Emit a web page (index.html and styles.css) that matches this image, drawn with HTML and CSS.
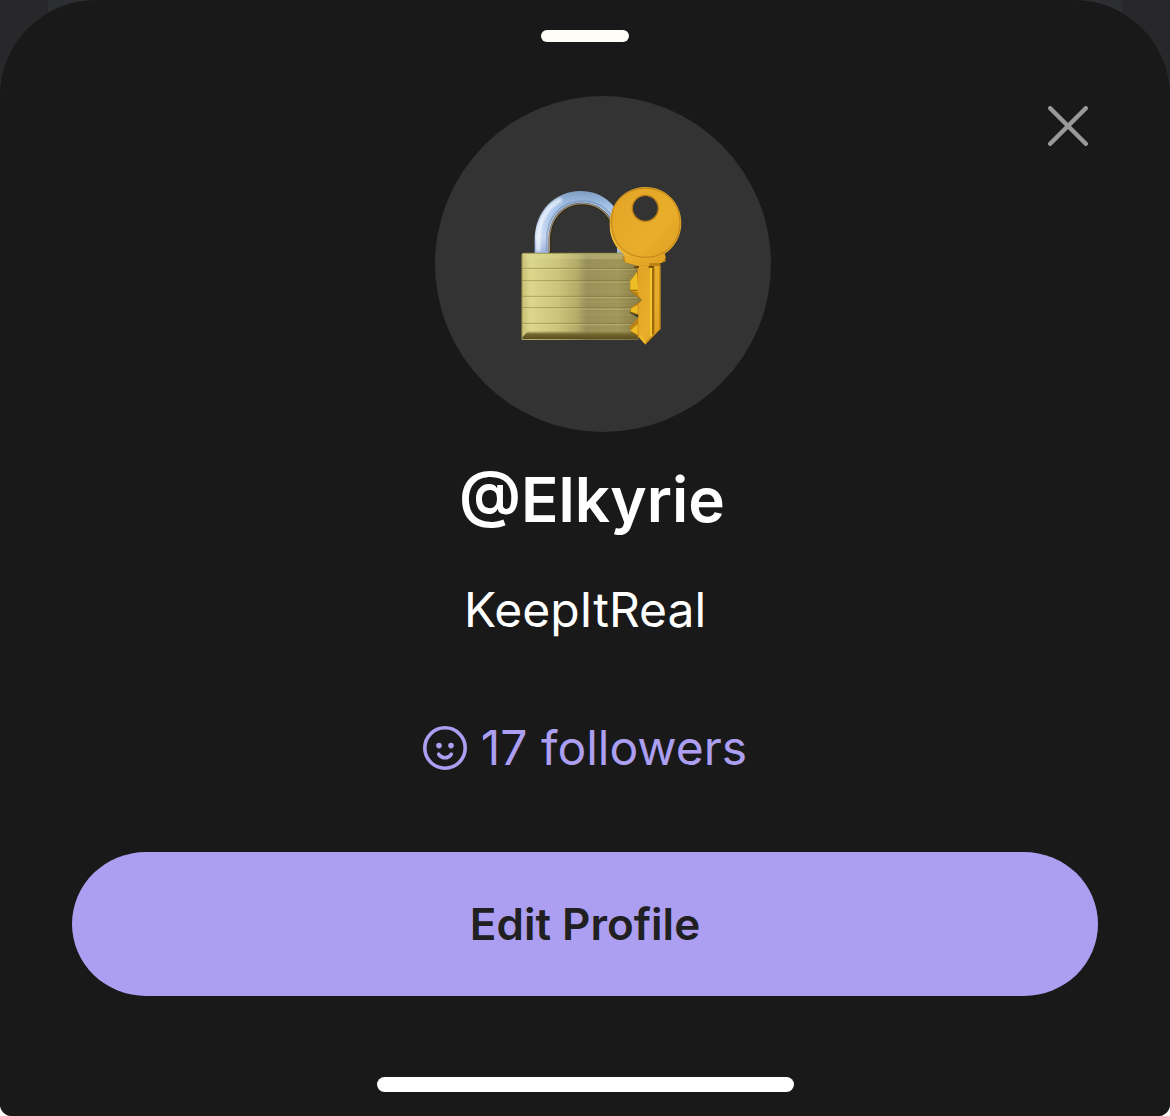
FILE: index.html
```html
<!DOCTYPE html>
<html lang="en">
<head>
    <meta charset="UTF-8">
    <meta name="viewport" content="width=device-width, initial-scale=1.0">
    <title>@Elkyrie</title>
    <link rel="stylesheet" href="styles.css">
</head>
<body>
    <div class="backdrop">
        <main class="sheet">
            <div class="handle"></div>
            <button class="close" type="button" aria-label="Close">
                <svg viewBox="0 0 40 40" aria-hidden="true">
                    <path d="M2.2 2.2 37.8 37.8M37.8 2.2 2.2 37.8"/>
                </svg>
            </button>

            <div class="avatar-row">
                <div class="avatar">
                    <svg class="emoji" viewBox="9 -18 600 600" role="img" aria-label="Locked with key">
                        <defs>
                            <linearGradient id="steel" x1="0" y1="0" x2="0" y2="1">
                                <stop offset="0" stop-color="#7f9cc0"/>
                                <stop offset=".25" stop-color="#a3c3ea"/>
                                <stop offset=".75" stop-color="#c9d8f2"/>
                                <stop offset="1" stop-color="#9cb2dc"/>
                            </linearGradient>
                            <linearGradient id="brass" x1="0" x2="1">
                                <stop offset="0" stop-color="#c5bf72"/>
                                <stop offset=".07" stop-color="#dcd78c"/>
                                <stop offset=".3" stop-color="#cbc47b"/>
                                <stop offset=".46" stop-color="#b3ab69"/>
                                <stop offset=".54" stop-color="#99905a"/>
                                <stop offset=".8" stop-color="#a0965a"/>
                                <stop offset="1" stop-color="#877a43"/>
                            </linearGradient>
                            <linearGradient id="base" x1="0" y1="0" x2="0" y2="1">
                                <stop offset="0" stop-color="#8d8244" stop-opacity="0"/>
                                <stop offset=".4" stop-color="#75682f"/>
                                <stop offset="1" stop-color="#5c4d1d"/>
                            </linearGradient>
                            <linearGradient id="gold" x1="0" y1="0" x2="1" y2="1">
                                <stop offset="0" stop-color="#e3a326"/>
                                <stop offset=".6" stop-color="#e8ae2b"/>
                                <stop offset="1" stop-color="#dc9a1e"/>
                            </linearGradient>
                            <filter id="soft" x="-10%" y="-10%" width="120%" height="120%">
                                <feGaussianBlur stdDeviation="4"/>
                            </filter>
                        </defs>

                        <!-- shackle -->
                        <path d="M104 249V210C104 125 165 63 241 63c70 0 119 48 130 112v74h-20v-45c-2-57-46-106-104-106-60 0-101 45-101 113v38Z" fill="url(#steel)"/>
                        <path d="M115 244v-34C115 150 145 105 185 88" fill="none" stroke="#fff" stroke-width="12" opacity=".8" filter="url(#soft)"/>
                        <path d="M140 244v-34c0-68 42-117 108-117 45 0 77 23 94 60" fill="none" stroke="#6d7f9b" stroke-width="5" opacity=".5"/>
                        <path d="M148 247v-36c0-65 40-110 99-110 38 0 66 20 84 49" fill="none" stroke="#a38e70" stroke-width="4"/>
                        <path d="M153 247v-36c0-62 38-105 94-105 35 0 62 17 80 45" fill="none" stroke="#34301f" stroke-width="4"/>

                        <!-- body -->
                        <path d="M65 256q0-7 8-7H385l29 40v15l-23 28v30l34 28-34 28v12l27 15-27 31 25 27v6H65Z" fill="url(#brass)"/>
                        <path d="M68 252H378l8 15H80Z" fill="#e1dda0" opacity=".28"/>
                        <path d="M71 250H378" stroke="#a49954" stroke-width="3"/>
                        <g fill="none" stroke-width="3">
                            <path d="M67 295h341M67 332h324M67 379h340M67 413h332M67 460h330" stroke="#716630" opacity=".45"/>
                            <path d="M67 299h339M67 336h324M67 383h345M67 417h325M67 464h326" stroke="#e7e197" opacity=".35"/>
                            <path d="M67 310h333M67 350h324M67 366h330M67 395h350M67 434h340" stroke="#e3dc8b" stroke-width="2" opacity=".2"/>
                        </g>
                        <path d="M65 254v250" stroke="#716a38" stroke-width="4" opacity=".7"/>
                        <path d="M66 503 84 482h318l14 25H69Z" fill="url(#base)"/>

                        <!-- key -->
                        <path d="m414 288-2 16-22 28v30l35 29-33 22v12l27 12-29 34v7l28 27 18 19 45-46V278l16-3-2-23-129 8 10 18 38 9Z" fill="#bd8212"/>
                        <path d="m411 306-20 27v29l24 4Zm2 98-21 13v9l21 6Zm0 58-22 20 22 12Z" fill="#edbd24"/>
                        <path d="M391 361h22M392 427l22 7M392 486l22 12" fill="none" stroke="#8a6210" stroke-width="3"/>
                        <path d="M414 288h67v189l-46 44-20-22V403l11-12-12-17Z" fill="url(#gold)"/>
                        <path fill-rule="evenodd" d="M436 51c61 0 108 48 108 108 0 40-20 74-50 92l3 13-11 15h-38v8h-35l-37-10-4-23c-27-21-43-53-43-91 0-63 45-112 107-112Zm0 26a38 38 0 1 0 0 76 38 38 0 0 0 0-76Z" fill="url(#gold)"/>
                        <path d="M337 122C352 80 390 55 436 55c60 0 104 45 104 103 0 56-42 104-103 104-58 0-102-42-102-103 0-13 0-25 4-37" fill="none" stroke="#b57b17" stroke-width="3" opacity=".8"/>
                        <path d="M331 174c4 42 27 70 52 83" fill="none" stroke="#f0c63a" stroke-width="3"/>
                        <circle cx="436" cy="115" r="39" fill="none" stroke="#b87b16" stroke-width="4"/>
                        <path d="M403 288h14v6h-14ZM446 288h16v6h-16Z" fill="#704806"/>
                        <path d="M456 292h7v197l-7 7Z" fill="#9c680c"/>
                        <path d="M450 293h6v203l-6 6Z" fill="#f5c82e"/>
                        <path d="M479 285v192l-44 42" fill="none" stroke="#c58a16" stroke-width="3"/>
                        <path d="m418 501 17 20 5-5-21-23Z" fill="#f0bd2b"/>
                    </svg>
                </div>
            </div>

            <h1 class="handle-name">@Elkyrie</h1>
            <p class="display-name">KeepItReal</p>

            <a class="followers" href="#followers">
                <svg class="smiley" viewBox="0 0 44 44" aria-hidden="true">
                    <circle class="line" cx="22" cy="22" r="20.2"/>
                    <circle cx="16" cy="19.6" r="2.8"/>
                    <circle cx="28" cy="19.6" r="2.8"/>
                    <path class="line" d="M15.7 28.2q2.4 3.6 6.3 3.6t6.3-3.6"/>
                </svg>
                <span>17 followers</span>
            </a>

            <button class="edit" type="button">Edit Profile</button>
            <div class="home-bar"></div>
        </main>
    </div>
</body>
</html>
```
FILE: styles.css
```css
* {
    box-sizing: border-box;
}

body {
    margin: 0;
    background: #fff;
    color: #fff;
    font-family: Inter, "Liberation Sans", sans-serif;
}

.backdrop {
    background: linear-gradient(90deg, #28282a 48px, #2d2e31 48px, #2d2e31 calc(100% - 48px), #28282a calc(100% - 48px));
    border-radius: 0 0 12px 12px;
    overflow: hidden;
}

.sheet {
    position: relative;
    display: flex;
    flex-direction: column;
    align-items: center;
    min-height: 100vh;
    padding: 30px 72px 24px;
    background: #191919;
    border-radius: 96px 96px 0 0;
}

.handle {
    width: 88px;
    height: 12px;
    border-radius: 6px;
    background: #fffdf8;
}

.close {
    position: absolute;
    top: 94px;
    right: 70px;
    padding: 12px;
    border: none;
    background: none;
    cursor: pointer;
}

.close svg {
    display: block;
    width: 40px;
    height: 40px;
    fill: none;
    stroke: #999;
    stroke-width: 4.4;
    stroke-linecap: round;
}

.avatar-row {
    margin-top: 54px;
    padding-left: 36px;
}

.avatar {
    display: flex;
    align-items: center;
    justify-content: center;
    width: 336px;
    height: 336px;
    border-radius: 50%;
    background: #333;
}

.emoji {
    width: 200px;
    height: 200px;
}

.handle-name {
    margin: 28px 0 0;
    padding-left: 14px;
    font-size: 62px;
    font-weight: 600;
    line-height: 80px;
}

.display-name {
    margin: 38px 0 0;
    font-size: 48px;
    line-height: 64px;
}

.followers {
    display: flex;
    align-items: center;
    gap: 14px;
    margin-top: 74px;
    color: #ac9ff1;
    font-size: 48px;
    line-height: 64px;
    text-decoration: none;
}

.smiley {
    width: 44px;
    height: 44px;
    fill: #ac9ff1;
}

.smiley .line {
    fill: none;
    stroke: #ac9ff1;
    stroke-width: 3.6;
    stroke-linecap: round;
}

.edit {
    width: 100%;
    height: 144px;
    margin-top: 72px;
    border: none;
    border-radius: 74px / 72px;
    background: #ac9ff1;
    color: #202022;
    font-family: inherit;
    font-size: 44px;
    font-weight: 600;
    cursor: pointer;
}

.home-bar {
    width: 417px;
    max-width: 60%;
    height: 15px;
    margin-top: auto;
    border-radius: 8px;
    background: #fff;
}
```
